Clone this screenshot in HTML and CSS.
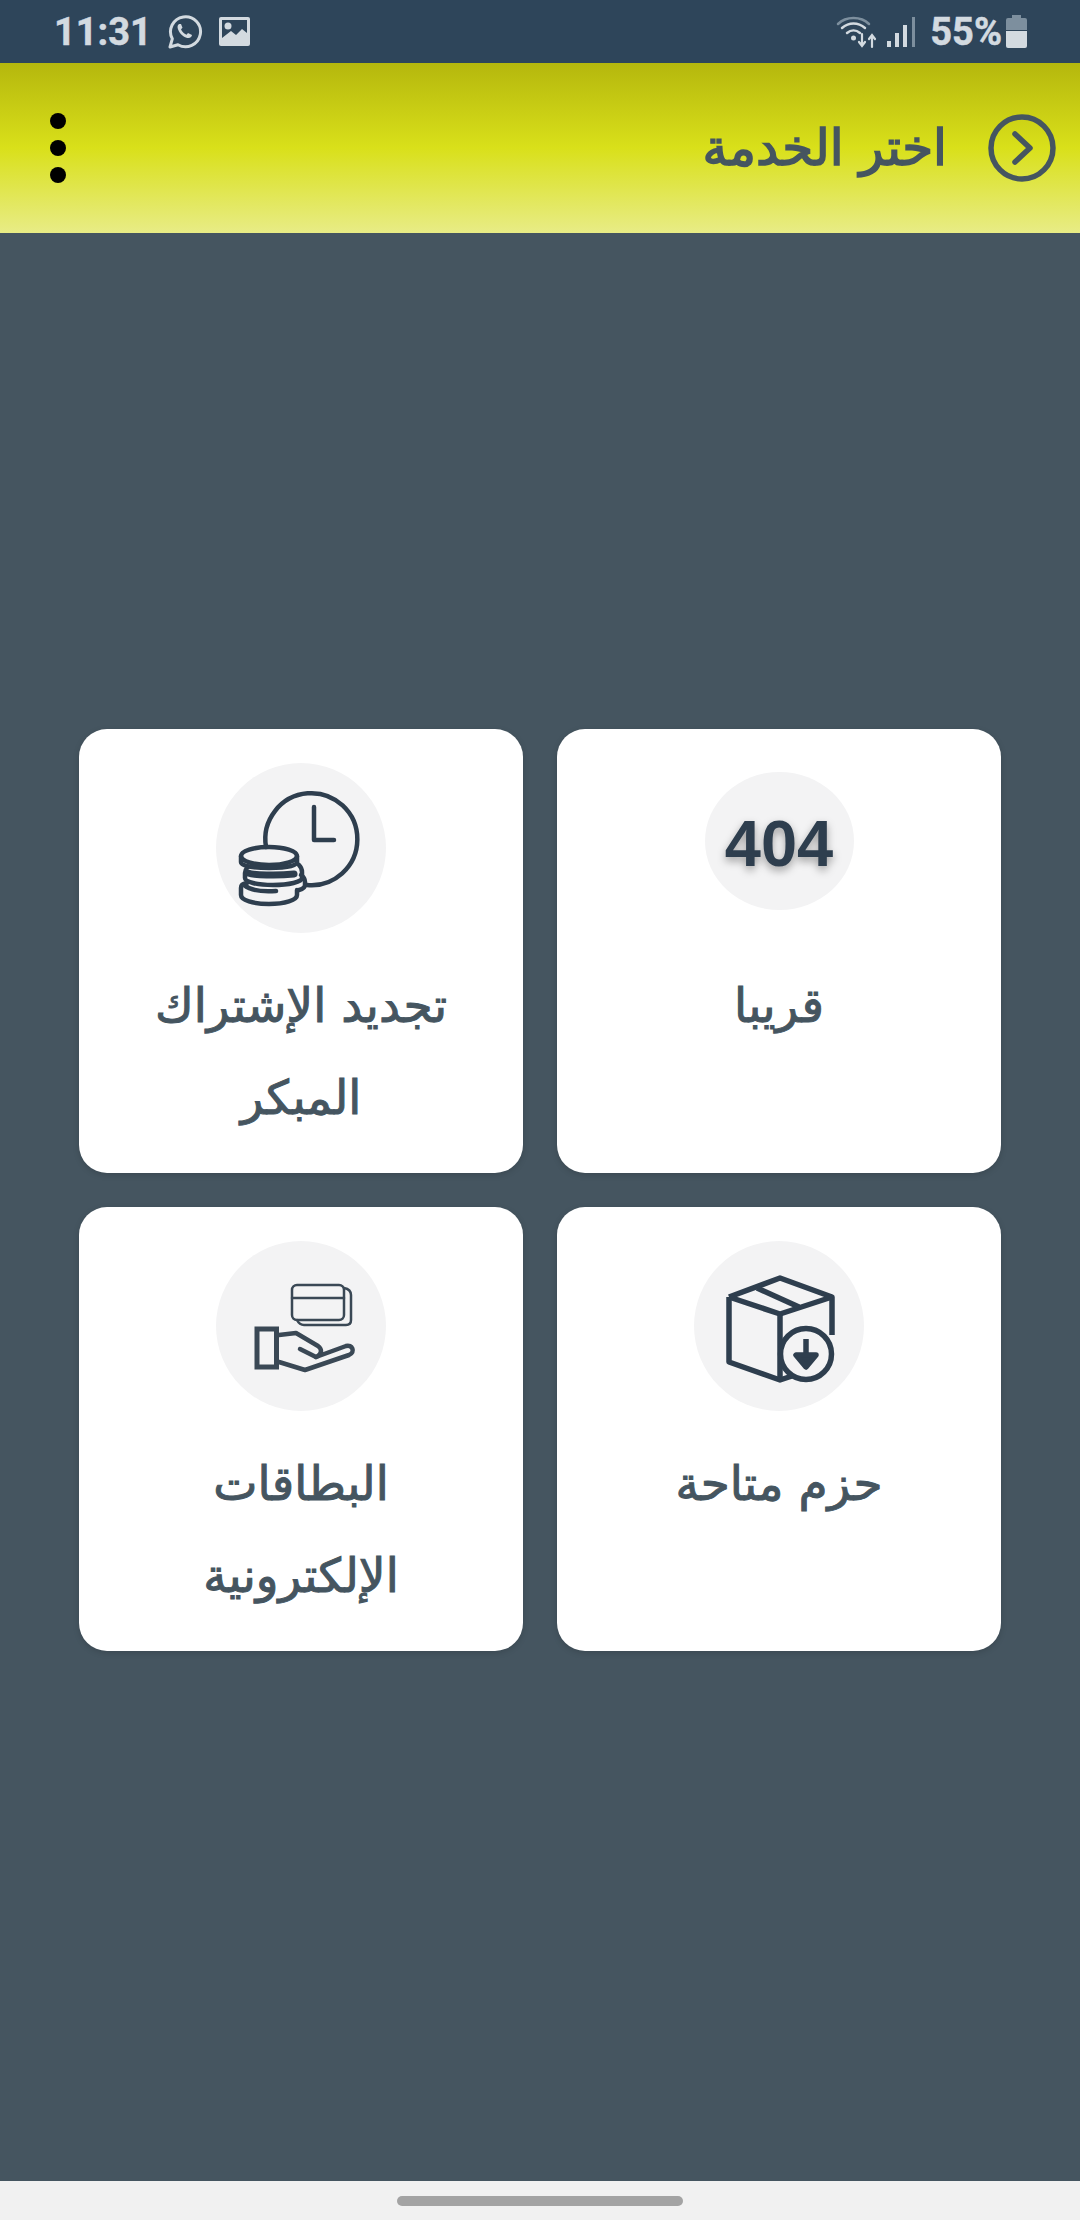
FILE: index.html
```html
<!DOCTYPE html>
<html lang="ar" dir="rtl">
<head>
    <meta charset="UTF-8">
    <meta name="viewport" content="width=device-width, initial-scale=1.0">
    <title>اختر الخدمة</title>
    <link rel="stylesheet" href="styles.css">
</head>
<body>
    <!-- Status bar -->
    <div class="status-bar" dir="ltr">
        <div class="status-group">
            <span class="status-time">11:31</span>
            <svg class="status-whatsapp" width="36" height="36" viewBox="0 0 36 36" fill="none">
                <path d="M3 33l2.300-8.200A15 15 0 1 1 11 30.700z" stroke="#d3dae0" stroke-width="3" stroke-linejoin="round"/>
                <path d="M12 10c-2 1.500-2 4 0 7.500 2.500 4 6 6.500 9.500 6.500 2 0 3.500-1.500 3.500-3l-4-2-1.500 1.800c-2.500-1-4.500-3-5.500-5.500l1.500-1.500-1.500-3.800z" fill="#d3dae0"/>
            </svg>
            <svg class="status-picture" width="31" height="29" viewBox="0 0 31 29">
                <rect width="31" height="29" rx="2" fill="#d3dae0"/>
                <path d="M3 3h25v13l-5-4-6 6-5-4-9 7z" fill="#2e455a"/>
                <circle cx="9" cy="9" r="3.500" fill="#d3dae0"/>
            </svg>
        </div>
        <div class="status-group">
            <svg class="status-wifi" width="42" height="34" viewBox="0 0 42 34" fill="none" stroke-linecap="round">
                <path d="M2 9C10 1 25 1 33 9" stroke="#7d8f9e" stroke-width="2.500"/>
                <path d="M6 13c7-6 16-6 23 0" stroke="#d3dae0" stroke-width="2.500"/>
                <path d="M11 18c4-3.500 9-3.500 13 0" stroke="#d3dae0" stroke-width="2.500"/>
                <circle cx="17.500" cy="23" r="2.500" fill="#d3dae0"/>
                <path d="M26 19v11m-3-3l3 4 3-4M36 32V21m-3 3l3-4 3 4" stroke="#d3dae0" stroke-width="2.200"/>
            </svg>
            <svg class="status-signal" width="28" height="30" viewBox="0 0 28 30">
                <rect x="0" y="24" width="4" height="6" fill="#d3dae0"/>
                <rect x="8" y="16" width="4" height="14" fill="#d3dae0"/>
                <rect x="16" y="8" width="4" height="22" fill="#d3dae0"/>
                <rect x="25" y="0" width="3" height="30" fill="#7d8f9e"/>
            </svg>
            <span class="status-battery-text">55%</span>
            <svg class="status-battery" width="21" height="33" viewBox="0 0 21 33">
                <path d="M6 0h9v3h4a2 2 0 0 1 2 2v10H0V5a2 2 0 0 1 2-2h4z" fill="#7d8f9e"/>
                <path d="M0 16h21v15a2 2 0 0 1-2 2H2a2 2 0 0 1-2-2z" fill="#d3dae0"/>
            </svg>
        </div>
    </div>

    <!-- Header -->
    <header class="app-header">
        <div class="header-title">
            <svg width="68" height="68" viewBox="0 0 68 68" fill="none" stroke="#455560" stroke-linecap="round" stroke-linejoin="round">
                <circle cx="34" cy="34" r="31" stroke-width="5.500"/>
                <path d="M27 20l15 14-15 14" stroke-width="5.500"/>
            </svg>
            <h1>اختر الخدمة</h1>
        </div>
        <div class="menu-dots">
            <span></span>
            <span></span>
            <span></span>
        </div>
    </header>

    <!-- Service cards -->
    <main class="services">
        <div class="service-grid">
            <div class="card">
                <div class="icon-slot">
                    <div class="icon-oval"><span class="code-404">404</span></div>
                </div>
                <p>قريبا</p>
            </div>
            <div class="card">
                <div class="icon-slot">
                    <div class="icon-circle">
                        <svg width="170" height="170" viewBox="0 0 170 170" fill="none" stroke="#2e3e4e" stroke-width="4.500" stroke-linecap="round" stroke-linejoin="round">
                            <path d="M50 84A46 46 0 1 1 91 122"/>
                            <path d="M98 44v33h20"/>
                            <ellipse cx="53" cy="93" rx="28" ry="9"/>
                            <path d="M25 93v6c0 4 12 6 28 6s28-2 28-6v-6"/>
                            <path d="M31 105c-2 2-2 3-2 5v5c0 4 12 7 28 7s29-3 29-7v-6c0-3-1-5-3-7"/>
                            <path d="M32 110c6 2 28 3 46 1" stroke-width="7"/>
                            <path d="M85 112c3 2 4 4 4 7v3c0 2-2 4-6 5"/>
                            <path d="M31 120c-5 1-6 2-6 5v7c0 5 12 9 28 9s28-4 28-9v-5"/>
                            <path d="M28 122c6 5 18 7 32 6"/>
                        </svg>
                    </div>
                </div>
                <p>تجديد الإشتراك المبكر</p>
            </div>
            <div class="card">
                <div class="icon-slot">
                    <div class="icon-circle">
                        <svg width="170" height="170" viewBox="0 0 170 170" fill="none" stroke="#2e3e4e" stroke-width="5.500" stroke-linejoin="round">
                            <path d="M35 56 86 37l52 19v38"/>
                            <path d="M35 56v65l51 18 12-4"/>
                            <path d="M35 56l51 17 52-17"/>
                            <path d="M63 47l42 19"/>
                            <path d="M86 73v66"/>
                            <circle cx="112" cy="113" r="25.500"/>
                            <path d="M112 98v22"/>
                            <path d="M102 114h20l-10 12z" fill="#2e3e4e"/>
                        </svg>
                    </div>
                </div>
                <p>حزم متاحة</p>
            </div>
            <div class="card">
                <div class="icon-slot">
                    <div class="icon-circle">
                        <svg width="170" height="170" viewBox="0 0 170 170" fill="none" stroke="#3a4855" stroke-linecap="round" stroke-linejoin="round">
                            <rect x="41" y="88" width="19.500" height="38" stroke-width="5" stroke-linejoin="miter"/>
                            <path d="M63 94l17-2 22 13c4 3 4 7 0 10l-2 1-16-8" stroke-width="4.500"/>
                            <path d="M63 121l26 8 44-15c7-3 3-11-3-9l-30 11" stroke-width="4.500"/>
                            <rect x="76" y="44" width="52" height="35" rx="5" stroke-width="2.500"/>
                            <path d="M81 79c2 4 4 5 7 5h42c4 0 5-2 5-5V54c0-4-2-6-7-7" stroke-width="2.500"/>
                            <path d="M76 57h52" stroke-width="2.500"/>
                        </svg>
                    </div>
                </div>
                <p>البطاقات الإلكترونية</p>
            </div>
        </div>
    </main>

    <!-- Navigation bar -->
    <div class="nav-bar">
        <div class="nav-pill"></div>
    </div>
</body>
</html>
```

FILE: styles.css
```css
* {
    box-sizing: border-box;
    margin: 0;
    padding: 0;
}
body {
    display: flex;
    flex-direction: column;
    width: 1080px;
    height: 2220px;
    overflow: hidden;
    background: #455560;
    font-family: "DejaVu Sans", "Noto Sans", sans-serif;
}

/* Status bar */
.status-bar {
    display: flex;
    justify-content: space-between;
    align-items: center;
    height: 63px;
    padding: 0 53px 0 54px;
    background: #2e455a;
}
.status-group {
    display: flex;
    align-items: center;
}
.status-time, .status-battery-text {
    color: #d3dae0;
    font-family: Roboto, sans-serif;
    font-size: 38px;
    font-weight: 700;
    -webkit-text-stroke: 0.5px #d3dae0;
}
.status-whatsapp {
    margin-left: 15px;
}
.status-picture {
    margin-left: 16px;
}
.status-signal {
    margin-left: 9px;
}
.status-battery-text {
    margin-left: 15px;
}
.status-battery {
    margin-left: 4px;
}

/* Header */
.app-header {
    display: flex;
    justify-content: space-between;
    align-items: center;
    height: 170px;
    padding: 0 24px 0 50px;
    background: linear-gradient(180deg, #b5b70d 0%, #d9e01a 50%, #e8ec86 100%);
}
.header-title {
    display: flex;
    align-items: center;
    gap: 41px;
}
.header-title h1 {
    color: #455560;
    font-size: 50px;
    font-weight: 400;
    -webkit-text-stroke: 1.6px #455560;
}
.menu-dots {
    display: flex;
    flex-direction: column;
    gap: 11px;
}
.menu-dots span {
    width: 16px;
    height: 16px;
    border-radius: 50%;
    background: #000;
}

/* Service cards */
.services {
    flex: 1;
    display: flex;
    justify-content: center;
    align-items: center;
    padding-bottom: 35px;
}
.service-grid {
    display: grid;
    grid-template-columns: 444px 444px;
    grid-auto-rows: 444px;
    gap: 34px;
}
.card {
    padding: 34px 50px 0;
    border-radius: 28px;
    background: #fff;
    box-shadow: 0 2px 6px rgba(0, 0, 0, 0.15);
    text-align: center;
}
.card p {
    margin-top: 27px;
    color: #455560;
    font-size: 47px;
    font-weight: 400;
    line-height: 92px;
    -webkit-text-stroke: 1px #455560;
}
.icon-slot {
    display: flex;
    justify-content: center;
    height: 170px;
}
.icon-circle {
    width: 170px;
    height: 170px;
    border-radius: 50%;
    background: #f3f3f4;
}
.icon-circle svg {
    display: block;
}
.icon-oval {
    display: flex;
    justify-content: center;
    align-items: center;
    width: 149px;
    height: 138px;
    margin-top: 9px;
    padding-top: 5px;
    border-radius: 50%;
    background: #f3f3f4;
}
.code-404 {
    color: #2e3e4e;
    font-family: "Liberation Sans", Arial, sans-serif;
    font-size: 65px;
    font-weight: 700;
    text-shadow: 0 4px 8px rgba(0, 0, 0, 0.35);
}

/* Navigation bar */
.nav-bar {
    display: flex;
    justify-content: center;
    align-items: center;
    height: 39px;
    background: #f1f1f1;
}
.nav-pill {
    width: 286px;
    height: 10px;
    border-radius: 5px;
    background: #a3a3a3;
}
```
